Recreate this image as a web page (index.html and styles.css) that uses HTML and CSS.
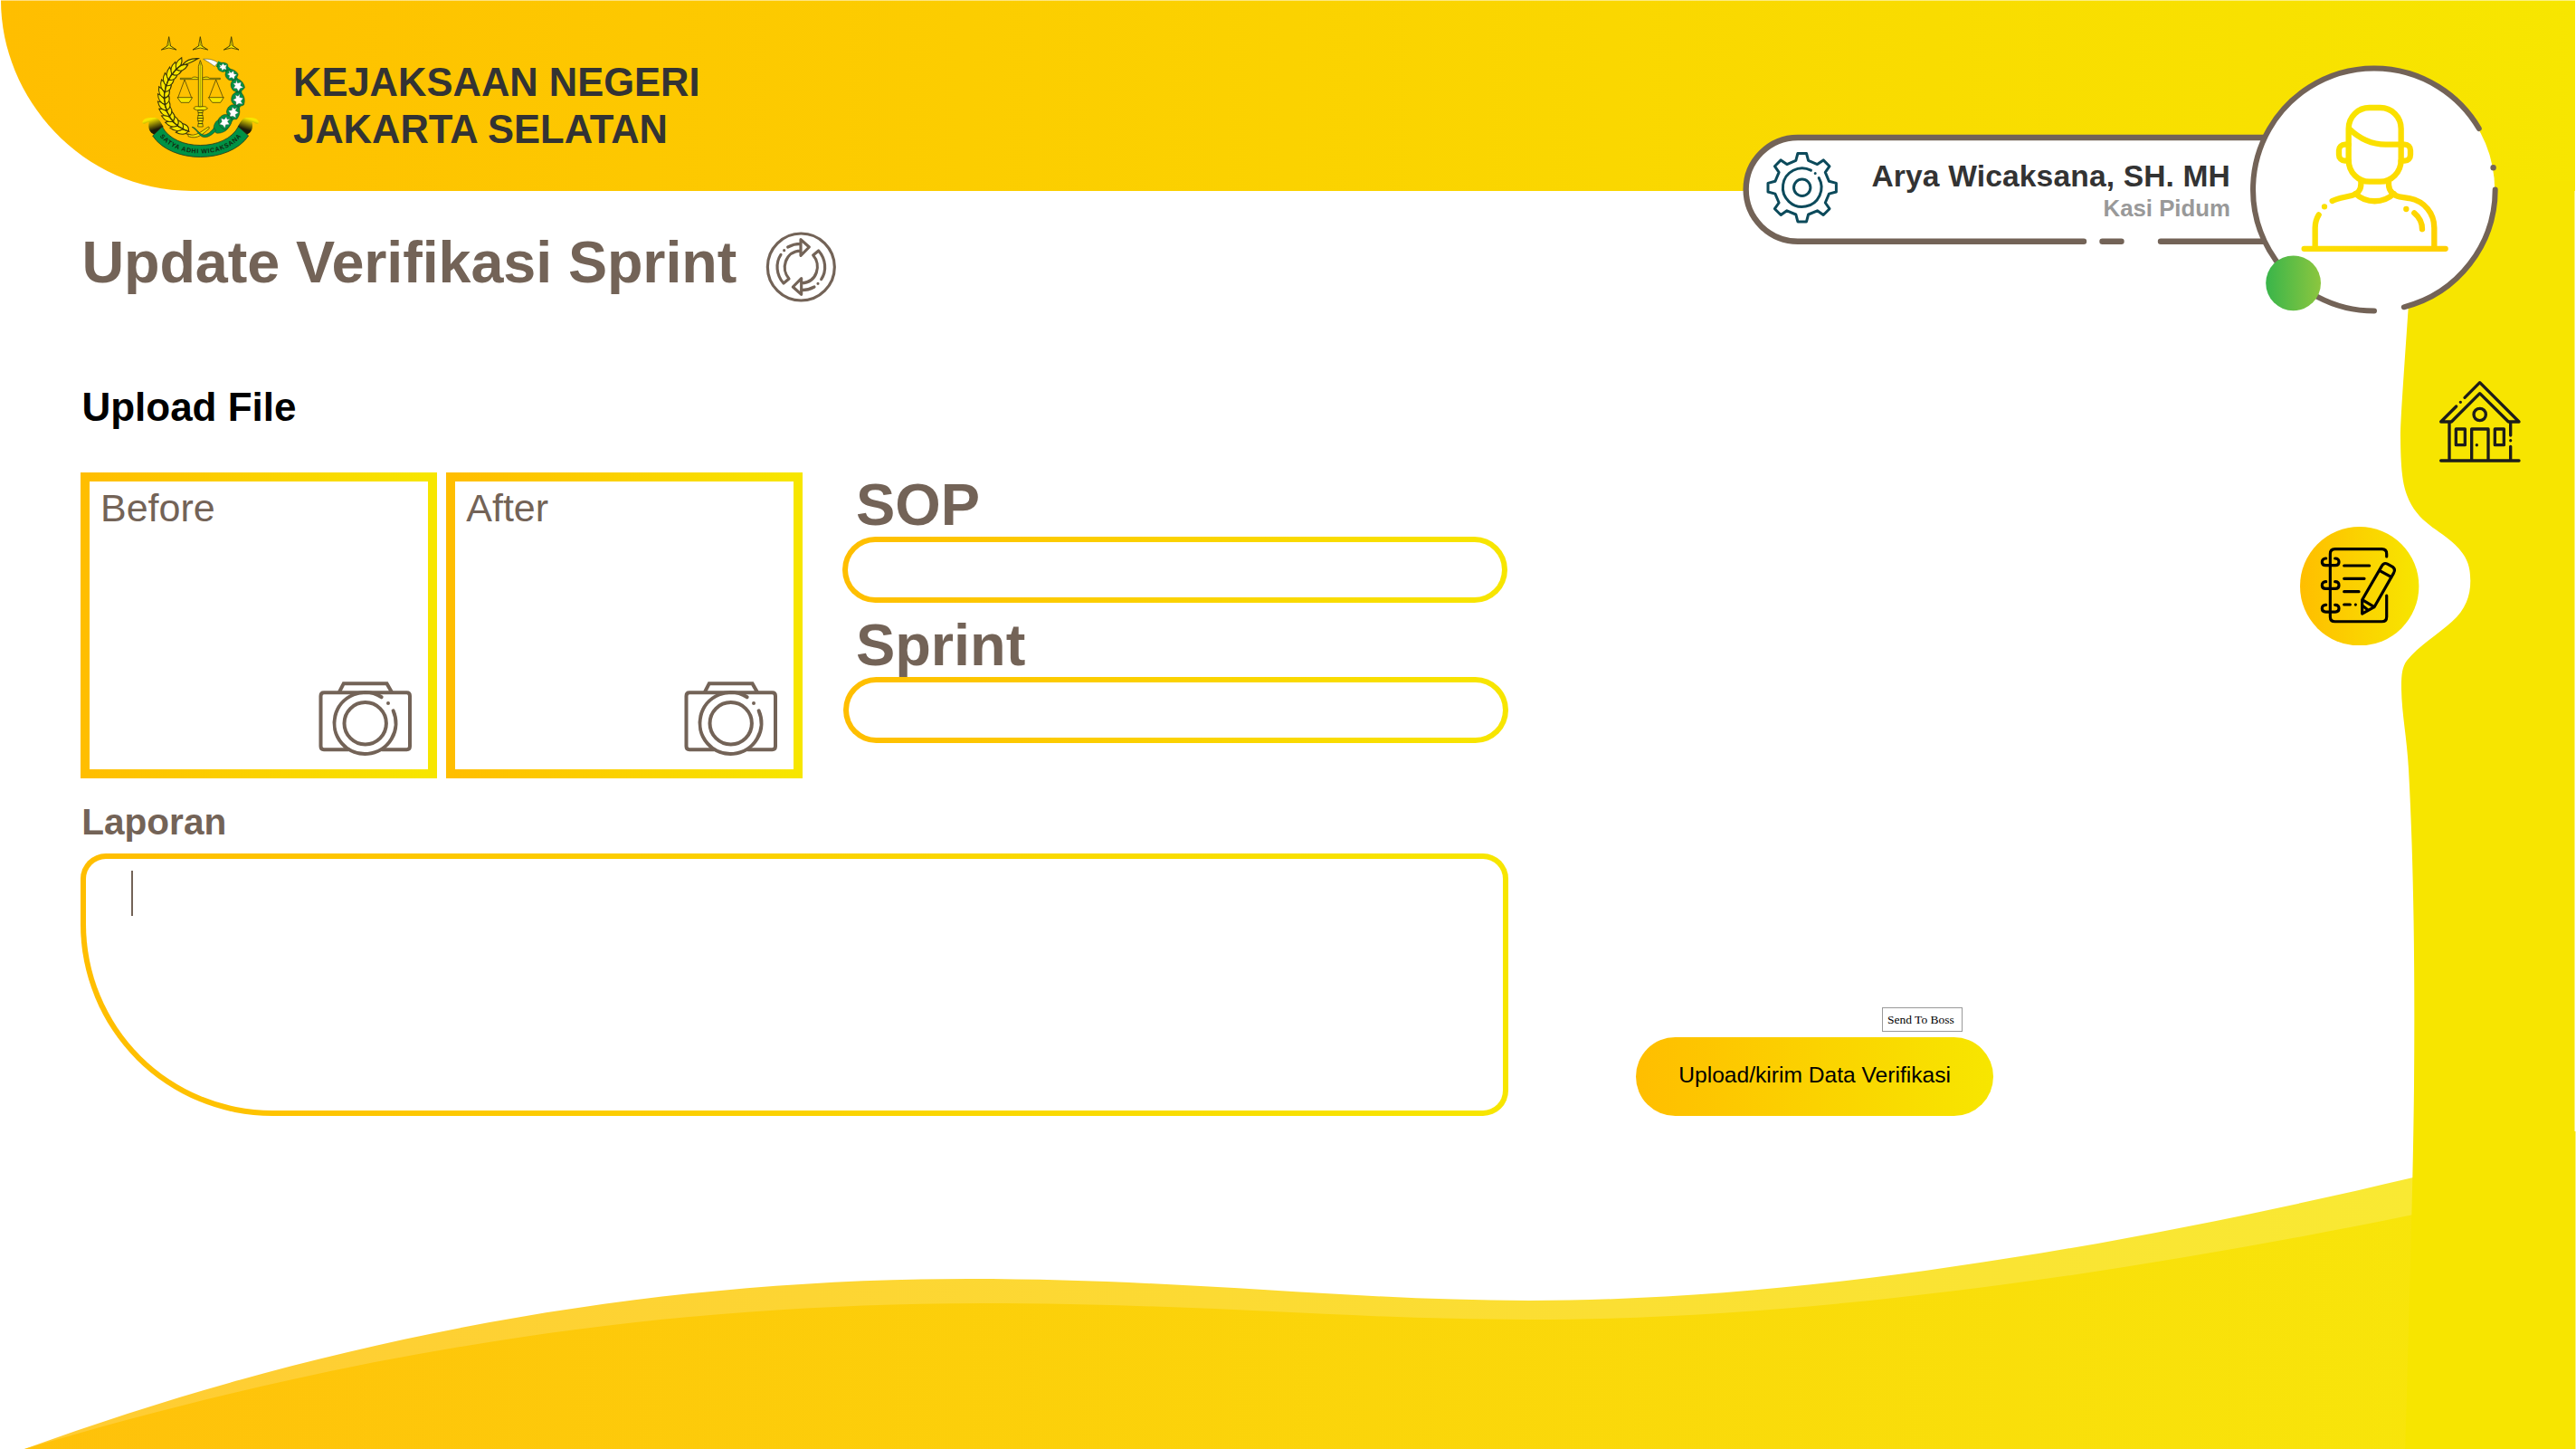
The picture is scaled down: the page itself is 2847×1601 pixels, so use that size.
FILE: index.html
```html
<!DOCTYPE html>
<html lang="id">
<head>
<meta charset="utf-8">
<title>Update Verifikasi Sprint</title>
<link rel="stylesheet" href="styles.css">
</head>
<body>
<div class="page">
  <svg class="backdrop" viewBox="0 0 2847 1601" aria-hidden="true">
    <defs>
      <linearGradient id="sun" gradientUnits="userSpaceOnUse" x1="0" y1="0" x2="2847" y2="0">
        <stop offset="0" stop-color="#ffbe00"/><stop offset="1" stop-color="#f7e600"/>
      </linearGradient>
    </defs>
    <path fill="url(#sun)" d="M1 .6H2846V211H212C90 211 1 108 1 .6Z"/>
    <g fill="url(#sun)" opacity=".8">
      <path d="M27 1601C360 1480 710 1413 1070 1413C1310 1413 1490 1437 1690 1437C2000 1437 2350 1376 2667 1301V1601Z"/>
    </g>
    <g fill="url(#sun)" opacity=".8">
      <path d="M27 1601C400 1490 740 1440 1085 1440C1330 1440 1490 1458 1690 1458C2000 1458 2350 1407 2667 1342V1601Z"/>
    </g>
    <path fill="#f7e500" d="M2670 200L2661.7 340C2656.7 413.3 2653 463.3 2653 483.3C2653.3 516.7 2655 533.3 2660 546.7C2671.7 578.3 2696.7 585 2713.3 601.7C2726.7 615 2730.3 625 2730.3 641.7C2730.3 658.3 2725 673.3 2710 686.7C2693.3 701.7 2673.3 713.3 2660 730C2655 736.7 2654 745 2654 758.3C2654 786.7 2660 813.3 2662 850C2668 960 2669 1080 2668 1200C2667 1300 2663 1440 2658.3 1601H2846.5V1250H2845.5V200Z"/>
  </svg>

  <header class="header">
    <svg class="emblem" viewBox="0 0 480 465">
      <defs>
        <linearGradient id="curl" x1=".2" y1="0" x2=".6" y2="1"><stop offset=".15" stop-color="#f7e600"/><stop offset=".75" stop-color="#1c1a08"/></linearGradient>
        <g id="star"><path d="M0-23L6 8L25 20L0 14L-25 20L-6 8Z"/><path d="M0-23V4L25 20M0 4L-25 20" fill="none" stroke-width="1.2"/></g>
        <g id="ear"><path d="M0 0C4-14 18-22 38-19C30-4 14 4 0 0Z"/><path d="M0 0C4 16 18 20 38 13C30 0 14-4 0 0Z"/><path d="M-4-1H24" fill="none"/></g>
        <g id="boll"><path fill="#009245" d="M-24-6C-18-24 6-24 22-13C27 4 14 23-2 23C-18 20-28 10-24-6Z"/><path fill="#fff" stroke="#555" stroke-width="1" d="M-17-10L-6-6L0-17L7-7L18-10L13 1L16 12L5 9L-4 17L-6 6L-17 5L-11-2Z"/></g>
        <path id="motto" d="M104 354C160 440 330 440 386 354"/>
      </defs>
      <g fill="#f7e600" stroke="#3a3508" stroke-width="2.4">
        <use href="#star" x="140" y="55"/><use href="#star" x="244" y="55"/><use href="#star" x="347" y="55"/>
        <g transform="translate(245 235)" stroke-width="3.4">
          <path fill="none" d="M-30 124C-90 108-122 60-122 0"/>
          <use href="#ear" transform="rotate(-160) translate(0 -116)"/>
          <use href="#ear" transform="rotate(-150) translate(0 -117)"/>
          <use href="#ear" transform="rotate(-140) translate(0 -118)"/>
          <use href="#ear" transform="rotate(-130) translate(0 -118)"/>
          <use href="#ear" transform="rotate(-120) translate(0 -118)"/>
          <use href="#ear" transform="rotate(-110) translate(0 -118)"/>
          <use href="#ear" transform="rotate(-100) translate(0 -118)"/>
          <use href="#ear" transform="rotate(-90) translate(0 -119)"/>
          <use href="#ear" transform="rotate(-80) translate(0 -119)"/>
          <use href="#ear" transform="rotate(-70) translate(0 -120)"/>
          <use href="#ear" transform="rotate(-60) translate(0 -121)"/>
          <use href="#ear" transform="rotate(-50) translate(0 -122)"/>
          <use href="#ear" transform="rotate(-40) translate(0 -124)"/>
          <path d="M-60-110C-46-128-26-132-8-131C-26-122-40-112-60-110Z"/>
        </g>
      </g>
      <g stroke="#26331a" stroke-width="1.4">
        <path fill="none" stroke="#009245" stroke-width="20" d="M300 122C345 138 370 180 373 225C374 260 360 290 330 320"/>
        <path fill="#fff" d="M254 106C272 104 290 108 302 118L292 130C280 122 270 114 254 106Z"/>
        <use href="#boll" transform="translate(319 132) scale(.72)"/>
        <use href="#boll" transform="translate(348 158) scale(.85) rotate(25)"/>
        <use href="#boll" transform="translate(368 194) scale(.95) rotate(45)"/>
        <use href="#boll" transform="translate(370 240) rotate(75)"/>
        <use href="#boll" transform="translate(354 282) rotate(95)"/>
        <path fill="#009245" d="M288 334C290 308 316 294 346 300C348 332 328 352 300 352C292 350 288 344 288 334Z"/>
        <use href="#boll" transform="translate(326 314) rotate(120)"/>
      </g>
      <g fill="#f7e600" stroke="#3a3508" stroke-width="2.2">
        <path d="M178 169H215C222 163 230 165 237 168H252C260 165 268 163 275 169H310V173H178Z"/>
        <path fill="none" d="M192 174L170 234M192 174L215 234M296 174L273 234M296 174L320 234"/>
        <path d="M168 233H218L207 250H180ZM271 233H322L311 250H284Z"/>
        <path d="M244 110L251 130V264H238V130Z"/><path d="M244 118V262" stroke-width="1.2"/>
        <path d="M222 270C224 262 232 262 244 264C256 262 265 262 268 270L258 275H232Z"/>
        <path d="M236 276H253L251 290L254 302L251 316L253 330H236L238 316L235 302L238 290Z"/>
        <path d="M237 284H252M236 293H253M235 302H254M236 311H253M237 320H252" stroke-width="3"/>
        <path d="M204 354C226 366 248 345 272 330L274 336C254 352 236 374 204 362Z"/>
      </g>
      <path fill="#009245" stroke="#26331a" stroke-width="1.5" d="M216 331C230 330 240 356 256 357C272 356 280 344 290 334L296 344C282 358 268 368 252 364C240 360 234 342 216 331Z"/>
      <g id="curl-end"><path fill="url(#curl)" d="M52 319C52 300 72 300 95 300C110 304 114 318 122 330L92 356C76 350 70 336 74 315C64 314 62 324 52 319Z"/></g>
      <use href="#curl-end" transform="translate(490 0) scale(-1 1)"/>
      <path fill="#009245" stroke="#26331a" stroke-width="2.4" d="M118 330C160 412 328 412 370 330L404 360C340 454 148 454 86 360Z"/>
      <text class="motto"><textPath href="#motto" startOffset="50%" text-anchor="middle" textLength="302">SATYA ADHI WICAKSANA</textPath></text>
    </svg>
    <p class="office">KEJAKSAAN NEGERI<br>JAKARTA SELATAN</p>
  </header>

  <section class="profile">
    <svg class="profile-frame" viewBox="1920 66 850 290" aria-hidden="true">
      <defs>
        <linearGradient id="person" gradientUnits="userSpaceOnUse" x1="200" y1="300" x2="668" y2="640"><stop offset="0" stop-color="#f7e600"/><stop offset=".5" stop-color="#fddc00"/><stop offset="1" stop-color="#ffcf00"/></linearGradient>
        <linearGradient id="online"><stop offset="0" stop-color="#39b54a"/><stop offset="1" stop-color="#8cc63f"/></linearGradient>
      </defs>
      <path fill="#fff" d="M2510 152H1987A57.3 57.3 0 0 0 1987 266.7H2510Z"/>
      <g fill="none" stroke="#736357" stroke-width="6.4" stroke-linecap="round">
        <path d="M2510 152H1987A57.3 57.3 0 0 0 1987 266.7H2303M2323.500 266.700H2344.500M2388 266.700H2510"/>
      </g>
      <circle cx="2623.700" cy="209.700" r="133.500" fill="#fff"/>
      <g fill="none" stroke="#736357" stroke-width="6" stroke-linecap="round">
        <path d="M2739.800 142A134 134 0 1 0 2624 343.500M2656.800 339.300A134 134 0 0 0 2757.700 209.500"/>
      </g>
      <circle cx="2755.600" cy="185.300" r="3.200" fill="#736357"/>
      <circle cx="2534.600" cy="312.800" r="30.400" fill="url(#online)"/>
      <g fill="none" stroke="#0c4a5b" stroke-width="3" stroke-linejoin="round" stroke-linecap="round" transform="translate(1991.700 207.200)">
        <path d="M-4.800-37.700H4.800L6.900-29.800L16.800-25.600L23.500-30.300L30.300-23.500L25.600-16.800L29.800-6.900L37.700-4.800V4.800L29.800 6.900L25.600 16.800L30.300 23.500L23.500 30.300L16.800 25.600L6.900 29.800L4.800 37.700H-4.800L-6.900 29.800L-16.800 25.600L-23.500 30.300L-30.300 23.500L-25.600 16.800L-29.800 6.900L-37.700 4.800V-4.800L-29.800-6.900L-25.600-16.800L-30.300-23.500L-23.500-30.300L-16.800-25.600L-6.900-29.800Z"/>
        <path d="M18.500-10.600A21.300 21.300 0 1 1 9.700-19M14.500-15.800V-15.700"/>
        <circle r="9.200"/>
      </g>
      <g transform="translate(2480 60) scale(.33333)" fill="none" stroke="url(#person)" stroke-width="19" stroke-linecap="round">
        <path d="M347 247C347 205 380 177 416 177H452C490 177 521 207 521 247V350C521 392 488 422 452 422H416C380 422 347 392 347 350Z"/>
        <path d="M349 247C385 282 425 299 470 299H521"/>
        <path d="M347 299H335C324 299 315 307 315 318V333C315 345 324 353 335 353H347M521 299H533C544 299 552 307 552 318V333C552 345 544 353 533 353H521"/>
        <path d="M388 424C390 450 375 464 358 468C330 475 310 477 293 486M480 424V432C480 455 500 470 515 472L548 477C600 487 631 528 631 575V644"/>
        <path d="M370 462C405 495 462 495 497 462M236 644V575C236 560 240 545 248 532M565 526C582 540 591 558 591 580"/>
        <path d="M267 505V505.100M538 513V513.100"/>
        <path d="M200 644.500L668 644.600"/>
      </g>
    </svg>
    <div class="profile-text">
      <span class="name">Arya Wicaksana, SH. MH</span>
      <span class="role">Kasi Pidum</span>
    </div>
  </section>

  <div class="body">
    <main class="content">
      <div class="title-row">
        <h1 class="title">Update Verifikasi Sprint</h1>
        <svg class="refresh" viewBox="0 0 330 330" fill="none" stroke="#736357" stroke-width="9.500" stroke-linecap="round" stroke-linejoin="round">
          <circle cx="166" cy="165" r="111"/>
          <g id="turn"><path d="M165 74L193 99L165 127ZM164 88C148 88 135 92 122 99M110 110V110.100M99 124C80 152 84 192 108 219L126 204C98 172 112 114 165 111"/></g>
          <use href="#turn" transform="rotate(180 166 165)"/>
        </svg>
      </div>
      <h2 class="upload-title">Upload File</h2>

      <div class="upload-row">
        <div class="photo">
          <span>Before</span>
          <svg class="camera" viewBox="350 749 108 88"><g id="camera" fill="none" stroke="#736357" stroke-width="4" stroke-linecap="round">
            <path d="M384.800 827.200H358Q354.500 827.200 354.500 823.500V768Q354.500 764.300 358 764.300H449.500Q453 764.300 453 768V823.500Q453 827.200 449.500 827.200H422.500"/>
            <path d="M375.300 763L379.800 754.200H427.500L432.500 763"/>
            <path d="M421.700 769.300A34 34 0 1 0 434.600 784.300M429 776V776.100"/>
            <circle cx="403.700" cy="798.300" r="23.200"/>
          </g></svg>
        </div>
        <div class="photo">
          <span>After</span>
          <svg class="camera" viewBox="350 749 108 88"><use href="#camera"/></svg>
        </div>
        <div class="fields">
          <label class="field-label" for="sop">SOP</label>
          <input class="field" id="sop">
          <label class="field-label second" for="sprint">Sprint</label>
          <input class="field shifted" id="sprint">
        </div>
      </div>

      <h3 class="report-title">Laporan</h3>
      <div class="report-row">
        <div class="report"><i class="caret"></i></div>
        <div class="send">
          <span class="hint">Send To Boss</span>
          <button class="submit">Upload/kirim Data Verifikasi</button>
        </div>
      </div>
    </main>

    <nav class="nav">
      <svg class="home" viewBox="580 260 290 290" fill="none" stroke="#1d1d1b" stroke-width="10" stroke-linecap="round" stroke-linejoin="round">
        <path d="M673 327L723 277L853 407H818L723 313L629 407H594L645 356M659 342V342.100"/>
        <circle cx="723" cy="383" r="20"/>
        <path d="M622 410V536M825 410V452M825 469V469.100M825 489V536M594 536H853M696 536V431H751V536M713 484V484.100M644 431H674V484H644ZM773 431H803V484H773Z"/>
      </svg>
      <svg class="notes" viewBox="127 755 394 394" fill="none" stroke="#000" stroke-width="9.500" stroke-linecap="round" stroke-linejoin="round">
        <defs><linearGradient id="disc"><stop offset="0" stop-color="#ffbe00"/><stop offset="1" stop-color="#f7e600"/></linearGradient></defs>
        <circle cx="324" cy="952" r="197" fill="url(#disc)" stroke="none"/>
        <path d="M414 854V845Q414 829 398 829H243Q227 829 227 845V1053Q227 1069 243 1069H398Q414 1069 414 1053V983"/>
        <path id="ring" d="M213 860C205 859 200 865 200 872C200 879 205 883 212 883H244C251 883 256 879 256 872C256 865 251 860 243 860"/>
        <use href="#ring" y="77"/><use href="#ring" y="154"/>
        <path d="M273 884H357M273 927H340M273 970H322M273 1013H293M311 1013V1013.100"/>
        <path d="M333 997L398 885Q405 872 418 879L434 888Q445 896 437 909L373 1021L333 1043ZM390 900L430 922M333 997L373 1021M335 1017L352 1031"/>
      </svg>
    </nav>
  </div>
</div>
</body>
</html>
```
FILE: styles.css
```css
* { box-sizing: border-box; }

body {
  margin: 0;
  background: #fff;
  font-family: "Liberation Sans", Arial, sans-serif;
  color: #736357;
}

h1, h2, h3, p { margin: 0; }
svg { display: block; }

.page {
  position: relative;
  width: 2847px;
  height: 1601px;
  overflow: hidden;
}

.backdrop {
  position: absolute;
  inset: 0;
  width: 2847px;
  height: 1601px;
}

/* Header */
.header {
  position: relative;
  display: flex;
  height: 211px;
  padding-left: 140px;
}

.emblem {
  width: 160px;
  height: 155px;
  margin-top: 30px;
}

.motto {
  font-size: 21px;
  font-weight: bold;
  fill: #14260f;
}

.office {
  padding: 65.4px 0 0 24px;
  font-size: 43.5px;
  line-height: 52px;
  font-weight: bold;
  color: #333;
}

/* Profile card hangs over the lower edge of the header */
.profile {
  position: absolute;
  left: 1920px;
  top: 66px;
  width: 850px;
  height: 290px;
}

.profile-frame {
  position: absolute;
  inset: 0;
  width: 850px;
  height: 290px;
}

.profile-text {
  position: relative;
  display: flex;
  flex-direction: column;
  align-items: flex-end;
  width: 545px;
  padding-top: 109px;
  font-weight: bold;
  white-space: nowrap;
}

.name {
  font-size: 33.6px;
  line-height: 40px;
  letter-spacing: .14px;
  color: #333;
}

.role {
  font-size: 25.8px;
  line-height: 30px;
  color: #999;
}

/* Main area */
.body {
  position: relative;
  display: flex;
  justify-content: space-between;
}

.content { padding: 29px 0 0 89px; }

.title-row { display: flex; }

.title {
  width: 741px;
  padding: 14.6px 0 0 1.4px;
  font-size: 64.7px;
  line-height: 70px;
  letter-spacing: -.1px;
  white-space: nowrap;
}

.refresh {
  width: 110px;
  height: 110px;
}

.upload-title {
  margin-top: 74.5px;
  padding-left: 1.4px;
  font-size: 44px;
  line-height: 50px;
  color: #000;
}

.upload-row {
  display: flex;
  gap: 10.3px;
  margin-top: 47.5px;
}

.photo {
  display: flex;
  flex-direction: column;
  justify-content: space-between;
  width: 394px;
  height: 338px;
  padding: 4.4px 15px 12.5px 12px;
  border: 10.6px solid;
  border-image: linear-gradient(90deg, #ffbe00, #f7e600) 1;
  font-size: 43px;
  line-height: 50px;
}

.camera {
  align-self: flex-end;
  width: 108px;
  height: 88px;
}

.fields {
  display: flex;
  flex-direction: column;
  margin-left: 33.5px;
}

.field-label {
  padding-left: 14.8px;
  font-size: 64.9px;
  line-height: 71px;
  font-weight: bold;
}

.second { margin-top: 11px; }

.field,
.report,
.submit {
  border: 6px solid transparent;
  background:
    linear-gradient(#fff, #fff) padding-box,
    linear-gradient(90deg, #ffbe00, #f7e600) border-box;
}

.field {
  width: 735.4px;
  height: 72.8px;
  padding: 0 30px;
  border-radius: 36.4px;
  font-size: 32px;
  outline: none;
}

.shifted { margin-left: 1px; }

.report-title {
  margin-top: 25px;
  padding-left: 1.2px;
  font-size: 40.6px;
  line-height: 46px;
}

.report-row {
  display: flex;
  align-items: flex-end;
  gap: 141.3px;
  margin-top: 12px;
}

.report {
  width: 1578px;
  height: 289.7px;
  padding: 13px 0 0 50px;
  border-radius: 28px 28px 28px 212px;
}

.caret {
  display: block;
  width: 2px;
  height: 50px;
  background: #736357;
}

.send {
  display: flex;
  flex-direction: column;
  align-items: flex-end;
  width: 394.7px;
}

.hint {
  width: 89px;
  height: 27px;
  margin: 0 34px 5.7px 0;
  padding-left: 5px;
  border: 1px solid #999;
  background: #fff;
  font: 13.5px/25px "Liberation Serif", "Times New Roman", serif;
  color: #000;
}

.submit {
  width: 100%;
  height: 87px;
  padding: 0 0 3px;
  border: 0;
  border-radius: 43.5px;
  background: linear-gradient(90deg, #ffbe00, #f7e600);
  font: 24.6px "Liberation Sans", Arial, sans-serif;
  color: #000;
}

/* Side navigation */
.nav {
  display: flex;
  flex-direction: column;
  width: 304.7px;
  padding-top: 205.7px;
}

.home {
  width: 96.7px;
  height: 96.7px;
  margin-left: 151px;
}

.notes {
  width: 131.4px;
  height: 131.4px;
  margin-top: 68.3px;
}
```
